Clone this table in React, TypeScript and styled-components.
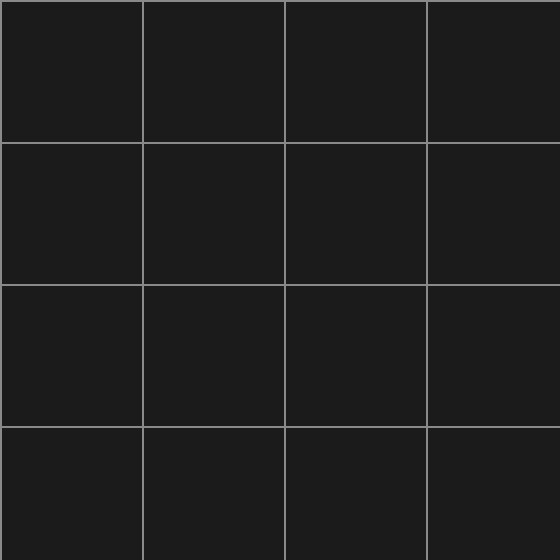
import React from "react";
import styled, { createGlobalStyle } from "styled-components";

const Global = createGlobalStyle`
  html, body { margin: 0; padding: 0; background: #1b1b1b; overflow: hidden; }
`;

const Viewport = styled.div`
  width: 560px;
  height: 560px;
  overflow: hidden;
`;

const Grid = styled.div`
  display: grid;
  grid-template-columns: repeat(4, 142px);
  grid-auto-rows: 142px;
  width: max-content;
  border: 1px solid #8a8a8a;
  background: #1b1b1b;
`;

const Cell = styled.div`
  box-sizing: border-box;
  border: 1px solid #8a8a8a;
  background: #1b1b1b;
`;

export default function App() {
  return (
    <>
      <Global />
      <Viewport>
        <Grid>
          {Array.from({ length: 16 }, (_, i) => (
            <Cell key={i} />
          ))}
        </Grid>
      </Viewport>
    </>
  );
}
